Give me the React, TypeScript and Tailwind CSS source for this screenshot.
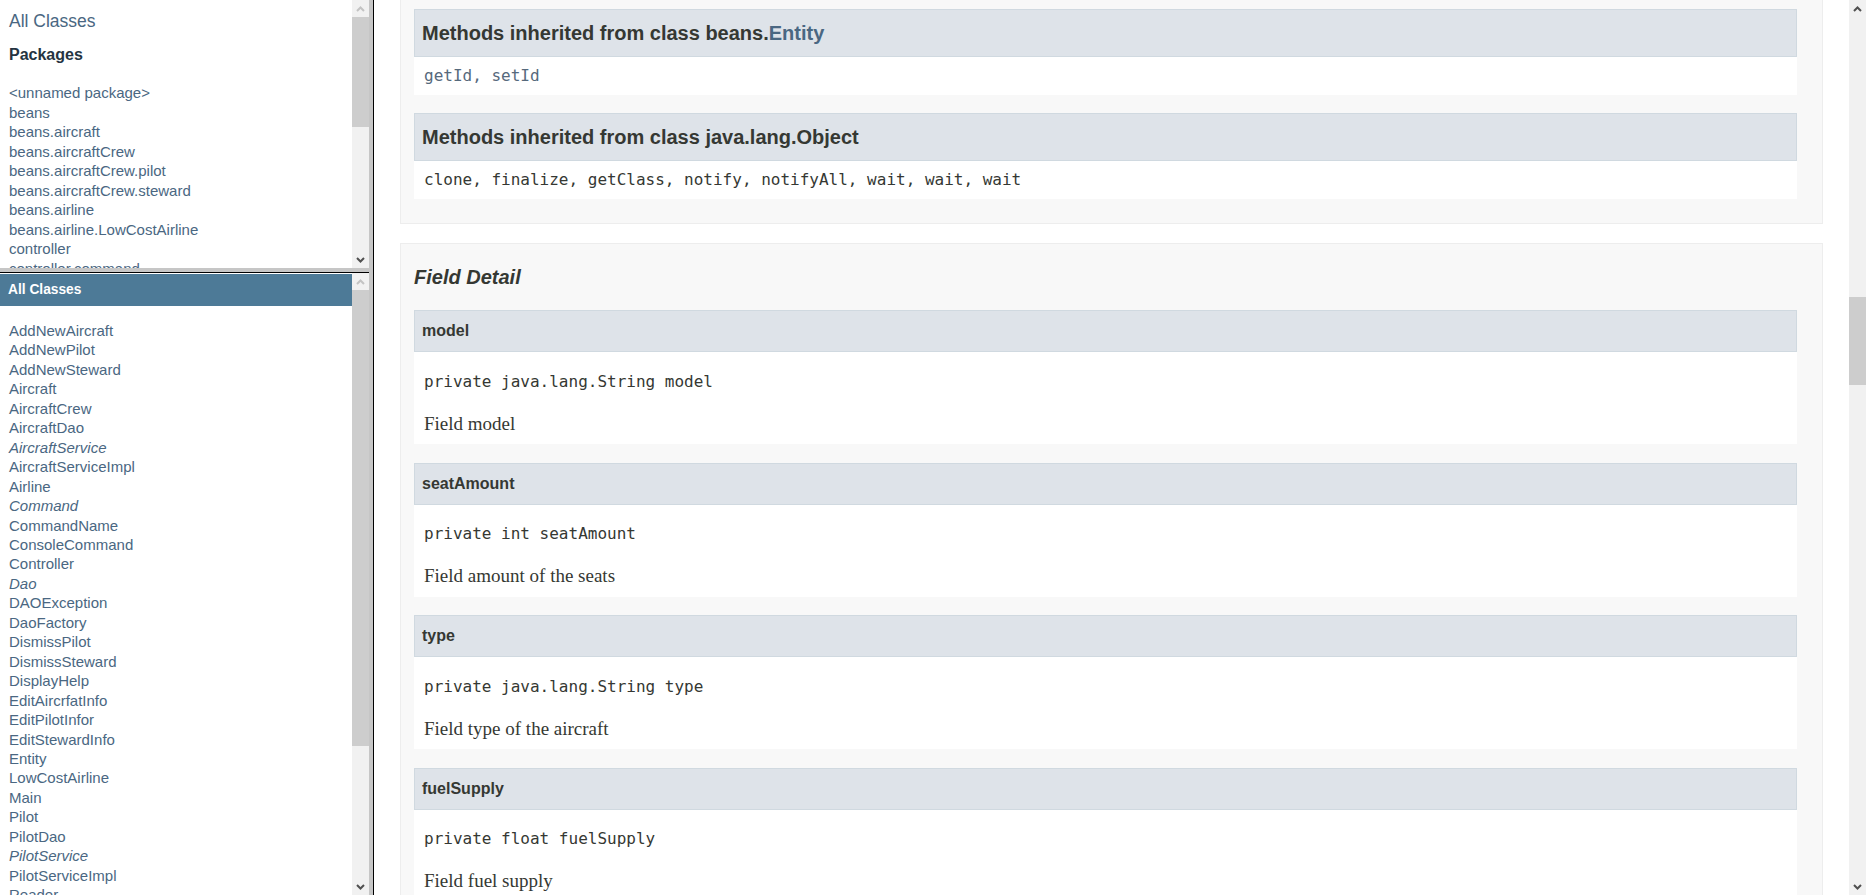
import React from 'react';

const packages = [
  '<unnamed package>',
  'beans',
  'beans.aircraft',
  'beans.aircraftCrew',
  'beans.aircraftCrew.pilot',
  'beans.aircraftCrew.steward',
  'beans.airline',
  'beans.airline.LowCostAirline',
  'controller',
  'controller.command',
];

const classes: [string, boolean][] = [
  ['AddNewAircraft', false],
  ['AddNewPilot', false],
  ['AddNewSteward', false],
  ['Aircraft', false],
  ['AircraftCrew', false],
  ['AircraftDao', false],
  ['AircraftService', true],
  ['AircraftServiceImpl', false],
  ['Airline', false],
  ['Command', true],
  ['CommandName', false],
  ['ConsoleCommand', false],
  ['Controller', false],
  ['Dao', true],
  ['DAOException', false],
  ['DaoFactory', false],
  ['DismissPilot', false],
  ['DismissSteward', false],
  ['DisplayHelp', false],
  ['EditAircrfatInfo', false],
  ['EditPilotInfor', false],
  ['EditStewardInfo', false],
  ['Entity', false],
  ['LowCostAirline', false],
  ['Main', false],
  ['Pilot', false],
  ['PilotDao', false],
  ['PilotService', true],
  ['PilotServiceImpl', false],
  ['Reader', false],
];

const fields = [
  { name: 'model', sig: 'private java.lang.String model', desc: 'Field model' },
  { name: 'seatAmount', sig: 'private int seatAmount', desc: 'Field amount of the seats' },
  { name: 'type', sig: 'private java.lang.String type', desc: 'Field type of the aircraft' },
  { name: 'fuelSupply', sig: 'private float fuelSupply', desc: 'Field fuel supply' },
];

function Arrow({ up, color }: { up?: boolean; color: string }) {
  return (
    <div className="flex h-[17px] w-[17px] items-center justify-center bg-[#f1f1f1]">
      <svg width="9" height="6" viewBox="0 0 9 6">
        <path
          d={up ? 'M1 5 L4.5 1.5 L8 5' : 'M1 1 L4.5 4.5 L8 1'}
          fill="none"
          stroke={color}
          strokeWidth="2"
        />
      </svg>
    </div>
  );
}

function Scrollbar({ before, thumb, upColor }: { before: number; thumb: number; upColor: string }) {
  return (
    <div className="flex w-[17px] shrink-0 flex-col bg-[#f1f1f1]">
      <Arrow up color={upColor} />
      <div className="shrink-0" style={{ height: before }} />
      <div className="shrink-0 bg-[#cdcdcd]" style={{ height: thumb }} />
      <div className="flex-1" />
      <Arrow color="#505050" />
    </div>
  );
}

export default function App() {
  return (
    <div className="flex h-[895px] w-[1866px] overflow-hidden bg-white font-['Liberation_Sans',Arial,sans-serif]">
      {/* left frames */}
      <div className="flex w-[369px] shrink-0 flex-col">
        <div className="flex h-[268px] shrink-0">
          <div className="flex-1 overflow-hidden pl-[9px] pt-[10px]">
            <div className="text-[17.5px] leading-[22px] text-[#4a6782]">All Classes</div>
            <div className="mt-[13px] text-[16px] font-bold leading-[20px] text-[#253441]">Packages</div>
            <ul className="mt-[18px] text-[15px] leading-[19.5px] text-[#4a6782]">
              {packages.map((p) => (
                <li key={p} className="whitespace-nowrap">{p}</li>
              ))}
            </ul>
          </div>
          <Scrollbar before={0} thumb={110} upColor="#c3c3c3" />
        </div>
        <div className="h-[4px] shrink-0 bg-[#c6c6c6]" />
        <div className="h-[1px] shrink-0 bg-black" />
        <div className="flex min-h-0 flex-1">
          <div className="flex-1 overflow-hidden">
            <div className="mt-[1px] flex h-[32px] items-center bg-[#4d7a97] pl-[8px] text-[13.75px] font-bold text-white">
              All Classes
            </div>
            <ul className="mt-[15px] pl-[9px] text-[15px] leading-[19.45px] text-[#4a6782]">
              {classes.map(([c, i]) => (
                <li key={c} className={i ? 'italic' : ''}>{c}</li>
              ))}
            </ul>
          </div>
          <Scrollbar before={0} thumb={456} upColor="#c3c3c3" />
        </div>
      </div>
      <div className="w-[4px] shrink-0 bg-[#c6c6c6]" />
      <div className="w-[1px] shrink-0 bg-black" />

      {/* main frame */}
      <div className="flex min-w-0 flex-1">
        <div className="flex-1 overflow-hidden px-[26px] text-[#353833]">
          <div className="border-x border-b border-[#ededed] bg-[#f8f8f8] pb-[24px] pl-[13px] pr-[25px] pt-[9px]">
            <div className="flex h-[48px] items-center border border-[#d0d9e0] bg-[#dee3e9] px-[7px] text-[20px] font-bold">
              Methods inherited from class beans.<span className="text-[#4a6782]">Entity</span>
            </div>
            <div className="flex h-[38px] items-center bg-white pl-[10px] font-['DejaVu_Sans_Mono',monospace] text-[16px] text-[#56697c]">
              getId, setId
            </div>
            <div className="mt-[18px] flex h-[48px] items-center border border-[#d0d9e0] bg-[#dee3e9] px-[7px] text-[20px] font-bold">
              Methods inherited from class java.lang.Object
            </div>
            <div className="flex h-[38px] items-center bg-white pl-[10px] font-['DejaVu_Sans_Mono',monospace] text-[16px]">
              clone, finalize, getClass, notify, notifyAll, wait, wait, wait
            </div>
          </div>

          <div className="mt-[19px] border border-[#ededed] bg-[#f8f8f8] pl-[13px] pr-[25px]">
            <h3 className="flex h-[66px] items-center text-[20px] font-bold italic">Field Detail</h3>
            {fields.map((f) => (
              <div key={f.name} className="mb-[18.5px] bg-white">
                <div className="flex h-[42px] items-center border border-[#d0d9e0] bg-[#dee3e9] px-[7px] text-[16px] font-bold">
                  {f.name}
                </div>
                <div className="flex h-[59px] items-center pl-[10px] font-['DejaVu_Sans_Mono',monospace] text-[16px]">
                  {f.sig}
                </div>
                <div className="flex h-[26px] items-center pl-[10px] font-['Liberation_Serif',serif] text-[19px]">
                  {f.desc}
                </div>
                <div className="h-[7px]" />
              </div>
            ))}
          </div>
        </div>
        <Scrollbar before={280} thumb={88} upColor="#505050" />
      </div>
    </div>
  );
}
